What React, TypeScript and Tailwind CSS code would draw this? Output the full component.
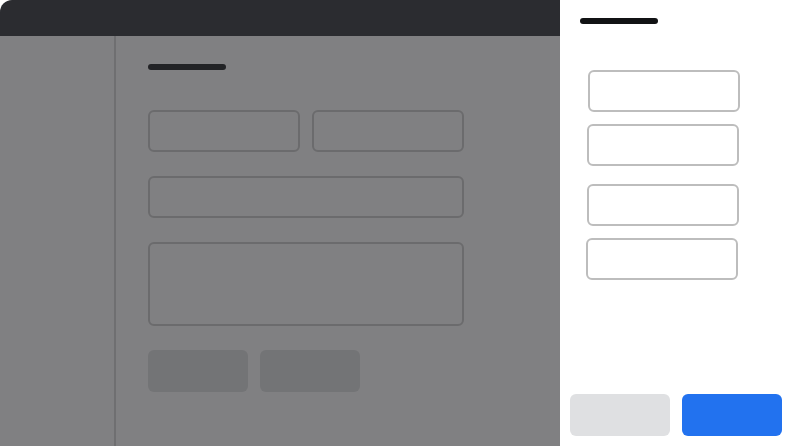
export default function App() {
  return (
    <div className="flex h-[446px] w-[790px] overflow-hidden bg-white">
      {/* page behind the drawer, dimmed */}
      <div className="flex w-[560px] shrink-0 flex-col">
        <div className="h-9 rounded-tl-xl bg-[#2b2c30]" />
        <div className="flex flex-1 bg-[#808082]">
          <aside className="w-[116px] border-r-2 border-[#6f6f71]" />
          <main className="flex flex-1 flex-col pl-8 pt-7">
            <div className="h-1.5 w-[78px] rounded-full bg-[#222326]" />
            <div className="mt-10 flex gap-3">
              <div className="h-[42px] w-[152px] rounded-md border-2 border-[#6b6b6d]" />
              <div className="h-[42px] w-[152px] rounded-md border-2 border-[#6b6b6d]" />
            </div>
            <div className="mt-6 h-[42px] w-[316px] rounded-md border-2 border-[#6b6b6d]" />
            <div className="mt-6 h-[84px] w-[316px] rounded-md border-2 border-[#6b6b6d]" />
            <div className="mt-6 flex gap-3">
              <div className="h-[42px] w-[100px] rounded-md bg-[#737476]" />
              <div className="h-[42px] w-[100px] rounded-md bg-[#737476]" />
            </div>
          </main>
        </div>
      </div>

      {/* drawer */}
      <div className="flex w-[230px] shrink-0 flex-col bg-white pb-[10px] pt-[18px]">
        <div className="ml-5 h-1.5 w-[78px] rounded-full bg-[#111214]" />
        <div className="mt-[46px] flex flex-col">
          <div className="ml-7 h-[42px] w-[152px] rounded-md border-2 border-[#bdbdbd]" />
          <div className="ml-[27px] mt-3 h-[42px] w-[152px] rounded-md border-2 border-[#bdbdbd]" />
          <div className="ml-[27px] mt-[18px] h-[42px] w-[152px] rounded-md border-2 border-[#bdbdbd]" />
          <div className="ml-[26px] mt-3 h-[42px] w-[152px] rounded-md border-2 border-[#bdbdbd]" />
        </div>
        <div className="mt-auto flex gap-3 pl-[10px]">
          <div className="h-[42px] w-[100px] shrink-0 rounded-md bg-[#dfe0e2]" />
          <div className="h-[42px] w-[100px] shrink-0 rounded-md bg-[#2272ef]" />
        </div>
      </div>
    </div>
  );
}
